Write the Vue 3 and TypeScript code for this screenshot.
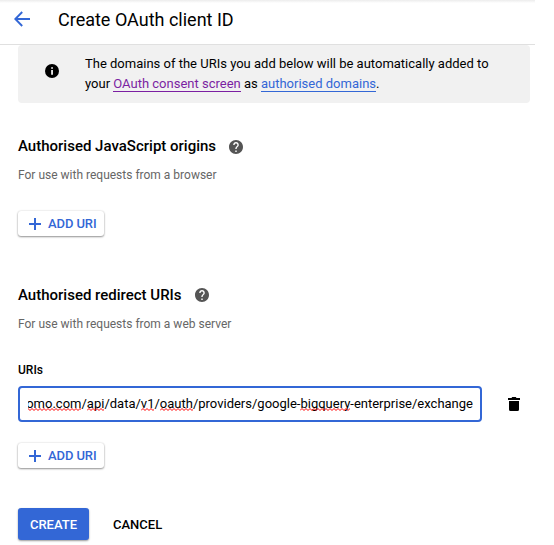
<script setup lang="ts">
interface UriPart {
  text: string
  misspelt?: boolean
}

interface Section {
  title: string
  hint: string
  kind: 'origins' | 'redirects'
}

const sections: Section[] = [
  { title: 'Authorised JavaScript origins', hint: 'For use with requests from a browser', kind: 'origins' },
  { title: 'Authorised redirect URIs', hint: 'For use with requests from a web server', kind: 'redirects' },
]

const uriParts: UriPart[] = [
  { text: 'omo.com', misspelt: true },
  { text: '/' },
  { text: 'api', misspelt: true },
  { text: '/data/' },
  { text: 'v1', misspelt: true },
  { text: '/' },
  { text: 'oauth', misspelt: true },
  { text: '/providers/google-' },
  { text: 'bigquery', misspelt: true },
  { text: '-enterprise/exchange' },
]

// Zigzag long enough for any word; the svg's own width clips it.
const squiggle = 'M0 2.5' + 'l2 -2l2 2'.repeat(25)
</script>

<template>
  <main class="page">
    <header class="topbar">
      <svg class="back" viewBox="0 0 16 16" width="16" height="16">
        <path d="M16 8H1.500M8.200 1L1.300 8l6.900 7" fill="none" stroke="#3367d6" stroke-width="1.900" />
      </svg>
      <h1>Create OAuth client ID</h1>
    </header>

    <div class="banner">
      <svg class="info" viewBox="0 0 14 14" width="14" height="14">
        <circle cx="7" cy="7" r="7" fill="#000" />
        <path d="M6.200 3.200h1.700v1.600H6.200zM6.200 6h1.700v4.800H6.200z" fill="#fff" />
      </svg>
      <p>
        <span class="line">The domains of the URIs you add below will be automatically added to</span>
        <span class="line">your <a class="visited">OAuth consent screen</a> as <a>authorised domains</a>.</span>
      </p>
    </div>

    <section v-for="s in sections" :key="s.kind" :class="['section', s.kind]">
      <h2>
        <span>{{ s.title }}</span>
        <svg viewBox="2 2 20 20" width="14" height="14">
          <path
            fill="#555"
            d="M12 2C6.480 2 2 6.480 2 12s4.480 10 10 10 10-4.480 10-10S17.520 2 12 2zm1 17h-2v-2h2v2zm2.070-7.750l-.9.920C13.450 12.900 13 13.500 13 15h-2v-.5c0-1.100.45-2.100 1.170-2.830l1.240-1.260c.37-.36.59-.86.59-1.410 0-1.100-.9-2-2-2s-2 .9-2 2H8c0-2.210 1.790-4 4-4s4 1.790 4 4c0 .88-.36 1.680-.93 2.250z"
          />
        </svg>
      </h2>
      <p class="hint">{{ s.hint }}</p>
      <template v-if="s.kind === 'redirects'">
        <div class="label">URIs</div>
        <div class="row">
          <div class="field">
            <div class="value">
              <span class="text"><span v-for="(p, i) in uriParts" :key="i" :class="{ misspelt: p.misspelt }">{{ p.text }}<svg v-if="p.misspelt" class="squiggle" height="3"><path :d="squiggle" fill="none" stroke="#f00" /></svg></span></span>
            </div>
          </div>
          <svg class="trash" viewBox="0 0 12 14" width="12" height="14">
            <path d="M0 1h3.500l.7-1h3.600l.7 1H12v2H0zM1 4h10v8.500q0 1.500-1.500 1.500h-7Q1 14 1 12.500z" fill="#000" />
          </svg>
        </div>
      </template>
      <button class="add" type="button">
        <svg viewBox="0 0 12 12" width="12" height="12">
          <path d="M5 0h2v5h5v2H7v5H5V7H0V5h5z" fill="#3367d6" />
        </svg>
        <span>ADD URI</span>
      </button>
    </section>

    <footer class="actions">
      <button class="create" type="button">CREATE</button>
      <button class="cancel" type="button">CANCEL</button>
    </footer>
  </main>
</template>

<style>
body {
  background: #fff;
  overflow: hidden;
}
</style>

<style scoped>
.page {
  box-sizing: border-box;
  width: 535px;
  height: 545px;
  overflow: hidden;
  font-family: Roboto, "Liberation Sans", sans-serif;
  font-size: 13px;
  color: #000;
}
h1, h2, p {
  margin: 0;
}
svg {
  display: block;
  flex: none;
}
button {
  border: 0;
  margin: 0;
  font-family: inherit;
}
.topbar {
  box-sizing: border-box;
  height: 45px;
  display: flex;
  align-items: flex-start;
  border-bottom: 1px solid #e0e0e0;
  padding: 8px 0 0 14px;
  background: linear-gradient(#ececec, #fff 3px);
}
.back {
  margin-top: 3px;
}
h1 {
  margin-left: 28px;
  font-size: 18px;
  line-height: 24px;
  font-weight: 400;
  white-space: nowrap;
}
.banner {
  box-sizing: border-box;
  width: 512px;
  height: 58px;
  margin-left: 18px;
  padding: 9px 0 0 27px;
  display: flex;
  background: #f1f1f1;
  border-radius: 4px;
}
.info {
  margin-top: 10px;
}
.banner p {
  margin-left: 26px;
  line-height: 20px;
}
.line {
  display: block;
  width: max-content;
}
a {
  color: #3367d6;
  border-bottom: 1px solid #3367d6;
}
a.visited {
  color: #7b1fa2;
  border-color: #7b1fa2;
}
.section {
  padding-left: 18px;
}
.origins {
  padding-top: 33px;
  height: 116px;
}
.redirects {
  padding-top: 33px;
}
h2 {
  display: flex;
  align-items: center;
  gap: 13px;
  font-size: 15px;
  line-height: 20px;
  font-weight: 500;
  white-space: nowrap;
}
.origins h2 svg {
  margin-top: 2px;
}
.hint {
  margin-top: 11px;
  font-size: 12px;
  line-height: 16px;
  color: #666;
  width: max-content;
}
.add {
  box-sizing: border-box;
  width: 86px;
  height: 25px;
  margin-top: 28px;
  padding: 0 0 0 11px;
  display: flex;
  align-items: center;
  gap: 7px;
  border-radius: 3px;
  background: #fff;
  color: #3367d6;
  font-size: 13px;
  font-weight: 500;
  letter-spacing: -0.1px;
  white-space: nowrap;
  box-shadow: 0 1px 2px rgba(0, 0, 0, 0.4), 0 0 2px rgba(0, 0, 0, 0.15);
}
.redirects .add {
  margin-top: 21px;
}
.label {
  margin-top: 30px;
  font-size: 12px;
  line-height: 16px;
  font-weight: 500;
}
.row {
  display: flex;
  align-items: center;
  margin-top: 8px;
}
.field {
  box-sizing: border-box;
  width: 464px;
  height: 36px;
  padding: 0 7px 0 8px;
  border: 2px solid #3367d6;
  border-radius: 4px;
}
.value {
  height: 32px;
  display: flex;
  justify-content: flex-end;
  overflow: hidden;
  line-height: 32px;
  white-space: nowrap;
}
.misspelt {
  position: relative;
}
.squiggle {
  position: absolute;
  left: 0;
  bottom: 0;
  width: 100%;
  overflow: hidden;
}
.trash {
  margin-left: 26px;
}
.actions {
  display: flex;
  align-items: center;
  gap: 24px;
  padding: 40px 0 0 18px;
}
.create,
.cancel {
  height: 32px;
  padding: 0;
  font-size: 13px;
  font-weight: 500;
  background: none;
  color: #000;
}
.create {
  width: 71px;
  border-radius: 3px;
  background: #3367d6;
  color: #fff;
  box-shadow: 0 1px 2px rgba(0, 0, 0, 0.4);
}
</style>
